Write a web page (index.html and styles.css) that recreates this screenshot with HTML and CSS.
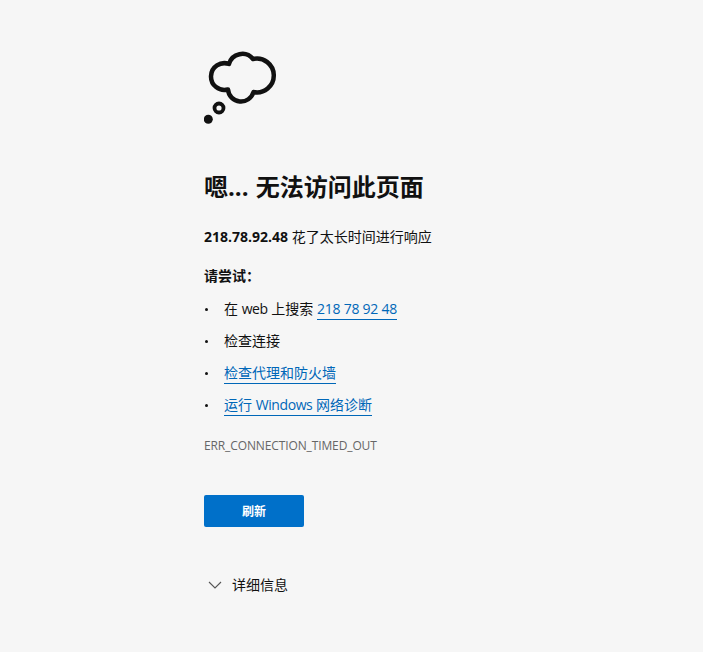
FILE: index.html
```html
<!DOCTYPE html>
<html lang="zh-CN">
<head>
    <meta charset="UTF-8">
    <title>218.78.92.48</title>
    <link rel="stylesheet" href="styles.css">
</head>
<body>
    <div class="container">
        <svg class="cloud" width="74" height="74" viewBox="0 0 74 74">
            <path d="M25 13 A13.800 13.800 0 0 1 49 8 A16.900 16.900 0 1 1 49.500 41 A13 13 0 0 1 24 38.500 A13.400 13.400 0 1 1 25 13 Z" fill="none" stroke="#111" stroke-width="4.500" stroke-linejoin="round"/>
            <circle cx="15" cy="57" r="4.500" fill="none" stroke="#111" stroke-width="3.800"/>
            <circle cx="4.300" cy="68.300" r="4.500" fill="#111"/>
        </svg>
        <h1>嗯... 无法访问此页面</h1>
        <p class="summary"><strong>218.78.92.48</strong> 花了太长时间进行响应</p>
        <p class="try">请尝试：</p>
        <ul class="suggestions">
            <li>在 <span class="word">web</span> 上搜索 <a href="#" class="digits">218 78 92 48</a></li>
            <li>检查连接</li>
            <li><a href="#">检查代理和防火墙</a></li>
            <li><a href="#">运行 <span class="word">Windows</span> 网络诊断</a></li>
        </ul>
        <div class="error-code">ERR_CONNECTION_TIMED_OUT</div>
        <button class="reload">刷新</button>
        <div class="details">
            <svg class="chevron" width="14" height="8" viewBox="0 0 14 8">
                <path d="M1 1 L7 7 L13 1" fill="none" stroke="#555" stroke-width="1.100"/>
            </svg>
            <span>详细信息</span>
        </div>
    </div>
</body>
</html>
```

FILE: styles.css
```css
body {
    margin: 0;
    background-color: #f6f6f6;
    color: #111;
    font-family: 'Open Sans', 'Noto Sans CJK SC', sans-serif;
    font-size: 14px;
}
.container {
    width: 295px;
    margin-left: 204px;
    padding-top: 51px;
}
.cloud {
    display: block;
}
h1 {
    margin: 45px 0 0;
    font-size: 24px;
    line-height: 34px;
    font-weight: 700;
    word-spacing: 1px;
}
.summary {
    margin: 23px 0 0;
    line-height: 20px;
}
.try {
    margin: 19px 0 0;
    line-height: 20px;
    font-weight: 700;
}
.suggestions {
    list-style: none;
    margin: 13px 0 0;
    padding: 0;
}
.suggestions li {
    position: relative;
    height: 20px;
    line-height: 20px;
    margin-bottom: 12px;
    padding-left: 20px;
}
.suggestions li::before {
    content: '';
    position: absolute;
    left: 1px;
    top: 9px;
    width: 3px;
    height: 3px;
    border-radius: 50%;
    background-color: #111;
}
.word {
    letter-spacing: -0.4px;
}
a {
    color: #0067b8;
    text-decoration: none;
    border-bottom: 1px solid #0067b8;
    padding-bottom: 1px;
}
.digits {
    letter-spacing: -0.25px;
}
.error-code {
    margin-top: 22px;
    font-size: 12px;
    line-height: 18px;
    letter-spacing: -0.12px;
    color: #666;
}
.reload {
    display: block;
    width: 100px;
    height: 32px;
    margin-top: 40px;
    padding: 0;
    border: none;
    border-radius: 2px;
    background-color: #0070c9;
    color: #fff;
    font-family: inherit;
    font-size: 12px;
    font-weight: 700;
}
.details {
    display: flex;
    align-items: center;
    gap: 10px;
    margin-top: 48px;
    padding-left: 4px;
    line-height: 20px;
}
```
